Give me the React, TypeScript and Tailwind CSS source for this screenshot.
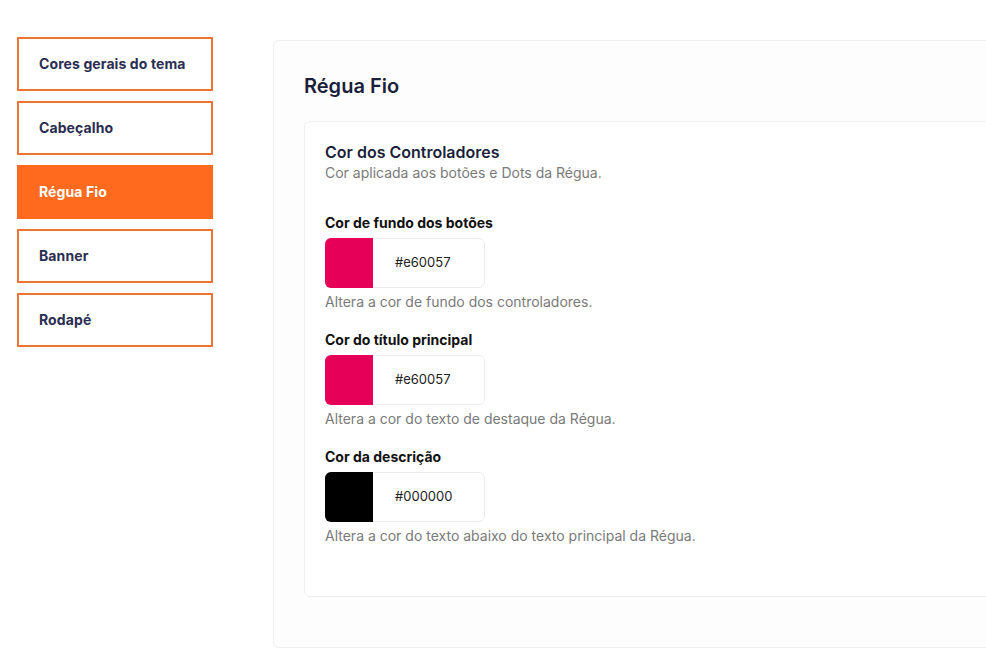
const menu = ["Cores gerais do tema", "Cabeçalho", "Régua Fio", "Banner", "Rodapé"];

const fields = [
  { label: "Cor de fundo dos botões", color: "#e60057", help: "Altera a cor de fundo dos controladores." },
  { label: "Cor do título principal", color: "#e60057", help: "Altera a cor do texto de destaque da Régua." },
  { label: "Cor da descrição", color: "#000000", help: "Altera a cor do texto abaixo do texto principal da Régua." },
];

function ColorField({ label, color, help }: { label: string; color: string; help: string }) {
  return (
    <div>
      <div className="text-sm leading-5 font-bold text-[#111]">{label}</div>
      <div className="mt-[5px] flex h-[50px] w-[160px] rounded-md border border-[#ececec] bg-white">
        <div className="w-[48px] -my-px -ml-px rounded-l-md" style={{ backgroundColor: color }} />
        <div className="flex items-center pl-[22px] text-[13px] text-[#222]">{color}</div>
      </div>
      <div className="mt-1 text-sm leading-5 text-[#7a7a7a]">{help}</div>
    </div>
  );
}

export default function App() {
  return (
    <div className="h-[654px] w-[986px] overflow-hidden bg-white font-['Inter',sans-serif]">
      <div className="flex pl-[17px] pt-[37px]">
        <nav className="flex w-[196px] shrink-0 flex-col gap-[10px]">
          {menu.map((item) =>
            item === "Régua Fio" ? (
              <div
                key={item}
                className="flex h-[54px] items-center bg-[#ff6a1f] pl-[22px] text-sm font-bold tracking-[0.1px] text-white"
              >
                {item}
              </div>
            ) : (
              <div
                key={item}
                className="flex h-[54px] items-center border-2 border-[#ee7434] pl-5 text-sm font-bold tracking-[0.1px] text-[#2b2d52]"
              >
                {item}
              </div>
            )
          )}
        </nav>

        <main className="ml-[60px] mt-[3px] w-[760px] shrink-0 rounded-md border border-[#efefef] bg-[#fdfdfd] px-[30px] pb-[50px] pt-[31px]">
          <h1 className="text-xl leading-7 font-semibold text-[#1b1f3b]">Régua Fio</h1>
          <section className="mt-[21px] rounded-md border border-[#efefef] bg-white px-5 pb-[50px] pt-[19px]">
            <h2 className="text-base leading-[22px] font-semibold text-[#1b1f3b]">Cor dos Controladores</h2>
            <p className="text-sm leading-5 text-[#7a7a7a]">Cor aplicada aos botões e Dots da Régua.</p>
            <div className="mt-[30px] flex flex-col gap-[18px]">
              {fields.map((f) => (
                <ColorField key={f.label} {...f} />
              ))}
            </div>
          </section>
        </main>
      </div>
    </div>
  );
}
